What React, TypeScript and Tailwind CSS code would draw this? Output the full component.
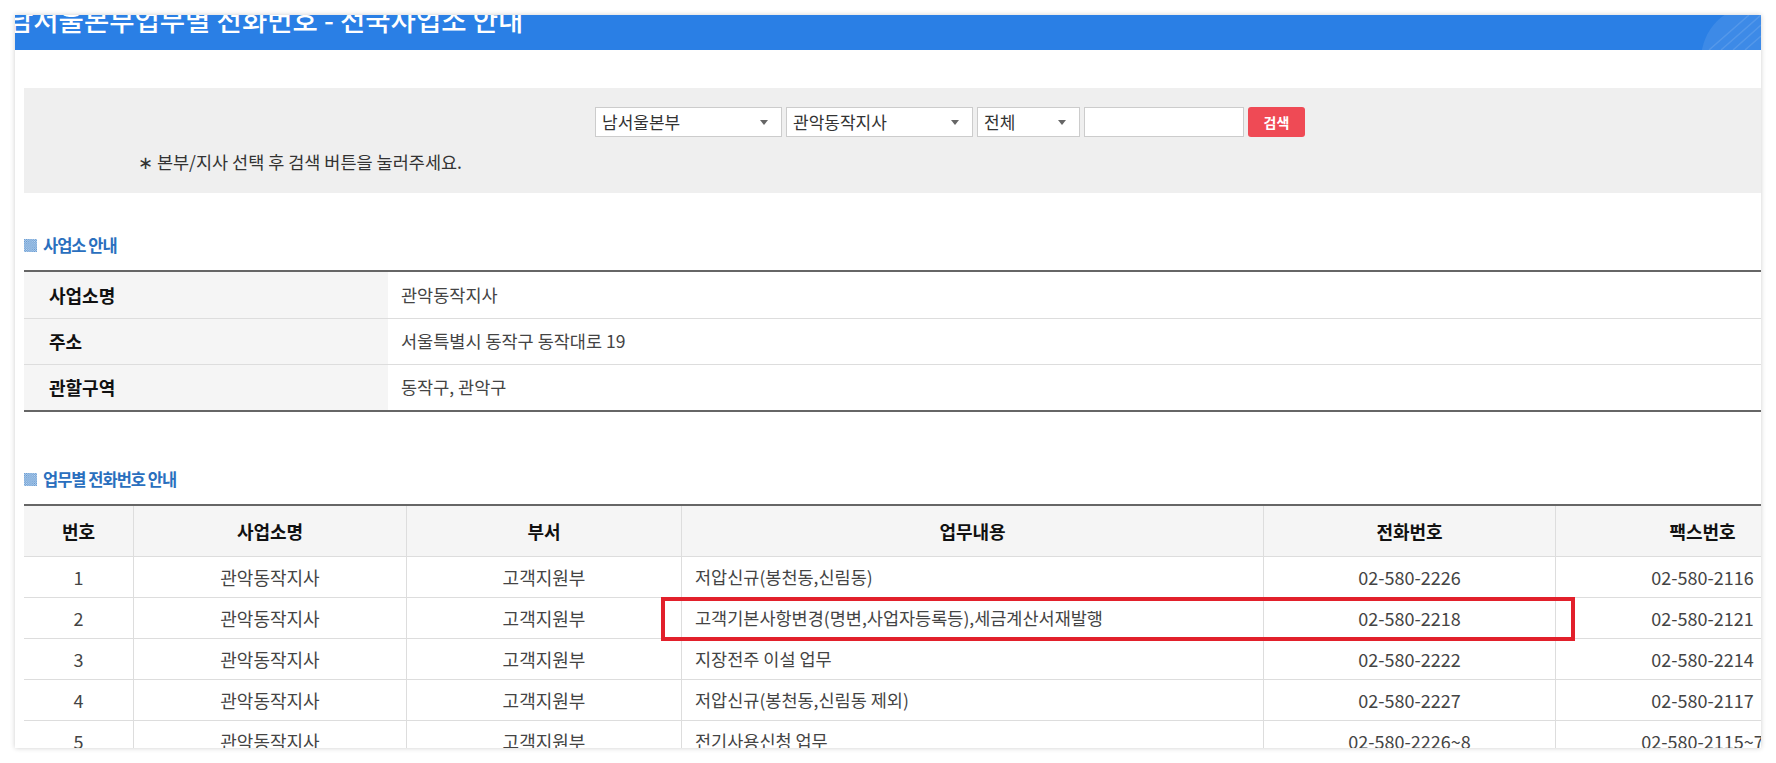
const rows = [
  { no: 1, office: "관악동작지사", dept: "고객지원부", task: "저압신규(봉천동,신림동)", tel: "02-580-2226", fax: "02-580-2116" },
  { no: 2, office: "관악동작지사", dept: "고객지원부", task: "고객기본사항변경(명변,사업자등록등),세금계산서재발행", tel: "02-580-2218", fax: "02-580-2121" },
  { no: 3, office: "관악동작지사", dept: "고객지원부", task: "지장전주 이설 업무", tel: "02-580-2222", fax: "02-580-2214" },
  { no: 4, office: "관악동작지사", dept: "고객지원부", task: "저압신규(봉천동,신림동 제외)", tel: "02-580-2227", fax: "02-580-2117" },
  { no: 5, office: "관악동작지사", dept: "고객지원부", task: "전기사용신청 업무", tel: "02-580-2226~8", fax: "02-580-2115~7" },
];

const info = [
  { label: "사업소명", value: "관악동작지사" },
  { label: "주소", value: "서울특별시 동작구 동작대로 19" },
  { label: "관할구역", value: "동작구, 관악구" },
];

const cols = "grid grid-cols-[109px_273px_275px_582px_292px_294px]";

function SectionTitle({ children }: { children: string }) {
  return (
    <h2 className="flex items-center gap-[6px] h-[18px] text-[16.5px] font-bold tracking-[-1px] text-[#2a6fbe]">
      <svg width="13" height="13" viewBox="0 0 12 12" className="shrink-0">
        <defs>
          <pattern id="chk" width="2" height="2" patternUnits="userSpaceOnUse">
            <rect width="2" height="2" fill="#c4dbf1" />
            <rect width="1" height="1" fill="#5d93cf" />
            <rect x="1" y="1" width="1" height="1" fill="#5d93cf" />
          </pattern>
        </defs>
        <rect width="12" height="12" fill="url(#chk)" />
      </svg>
      {children}
    </h2>
  );
}

function FakeSelect({ label, width }: { label: string; width: string }) {
  return (
    <div className={`${width} relative flex h-[30px] items-center border border-[#ccc] bg-white pl-[6px] text-[17px] text-[#333]`}>
      {label}
      <span className="absolute right-[13px] top-[12px] h-0 w-0 border-x-[4px] border-t-[5px] border-x-transparent border-t-[#666]" />
    </div>
  );
}

export default function App() {
  return (
    <div className="min-h-screen bg-white pl-[15px] pt-[15px] font-['Noto_Sans_CJK_KR','Noto_Sans',sans-serif]">
      <div className="h-[733px] w-[1746px] overflow-hidden bg-white shadow-[0_0_5px_rgba(0,0,0,0.2)]">
        {/* title band */}
        <div className="relative h-[35px] overflow-hidden bg-[#2a7fe5]">
          <h1 className="-ml-[7px] -mt-[12px] whitespace-nowrap text-[27.5px] font-medium leading-[32px] text-white">
            남서울본부업무별 전화번호 - 전국사업소 안내
          </h1>
          <svg className="absolute right-0 top-0" width="100" height="35" viewBox="0 0 100 35">
            <circle cx="95" cy="45" r="55" fill="#ffffff" fillOpacity="0.09" />
            <path d="M60 35 L100 0 M72 35 L100 10 M84 35 L100 21 M48 35 L88 0" stroke="#ffffff" strokeOpacity="0.12" strokeWidth="1.5" />
          </svg>
        </div>

        <div className="w-[1834px] pl-[9px]">
          {/* search */}
          <div className="mt-[38px] h-[105px] bg-[#efefef] pt-[19px]">
            <div className="flex gap-[4px] pl-[571px]">
              <FakeSelect label="남서울본부" width="w-[187px]" />
              <FakeSelect label="관악동작지사" width="w-[187px]" />
              <FakeSelect label="전체" width="w-[103px]" />
              <input className="h-[30px] w-[160px] border border-[#ccc] bg-white" />
              <button className="h-[30px] w-[57px] rounded-[3px] bg-[#ef4a55] text-[14px] font-bold text-white">검색</button>
            </div>
            <p className="mt-[14px] pl-[114px] text-[17.5px] leading-[22px] text-[#333]">∗ 본부/지사 선택 후 검색 버튼을 눌러주세요.</p>
          </div>

          {/* office info */}
          <div className="mt-[43px] mb-[16px]">
            <SectionTitle>사업소 안내</SectionTitle>
          </div>
          <div className="border-t-2 border-b-2 border-[#666]">
            {info.map((r, i) => (
              <div key={r.label} className={`flex h-[46px] ${i > 0 ? "border-t border-[#ddd]" : ""}`}>
                <div className="flex w-[364px] items-center bg-[#f5f5f5] pl-[25px] text-[18px] font-bold text-[#111]">{r.label}</div>
                <div className="flex items-center pl-[13px] text-[17.5px] text-[#444]">{r.value}</div>
              </div>
            ))}
          </div>

          {/* phone list */}
          <div className="mt-[58px] mb-[16px]">
            <SectionTitle>업무별 전화번호 안내</SectionTitle>
          </div>
          <div className="relative border-t-2 border-[#666]">
            <div className={`${cols} h-[51px] border-b border-[#ddd] bg-[#f5f5f5] text-[18px] font-bold text-[#111]`}>
              {["번호", "사업소명", "부서", "업무내용", "전화번호", "팩스번호"].map((h, i) => (
                <div key={h} className={`flex items-center justify-center ${i > 0 ? "border-l border-[#ddd]" : ""}`}>{h}</div>
              ))}
            </div>
            {rows.map((r) => (
              <div key={r.no} className={`${cols} h-[41px] border-b border-[#ddd] text-[18px] text-[#444]`}>
                <div className="flex items-center justify-center">{r.no}</div>
                <div className="flex items-center justify-center border-l border-[#ddd]">{r.office}</div>
                <div className="flex items-center justify-center border-l border-[#ddd]">{r.dept}</div>
                <div className="flex items-center border-l border-[#ddd] pl-[13px] text-[17.5px]">{r.task}</div>
                <div className="flex items-center justify-center border-l border-[#ddd]">{r.tel}</div>
                <div className="flex items-center justify-center border-l border-[#ddd]">{r.fax}</div>
              </div>
            ))}
            {/* highlight box */}
            <div className="pointer-events-none absolute left-[637px] top-[91px] h-[44px] w-[914px] border-[4px] border-[#e2202b]" />
          </div>
        </div>
      </div>
    </div>
  );
}
